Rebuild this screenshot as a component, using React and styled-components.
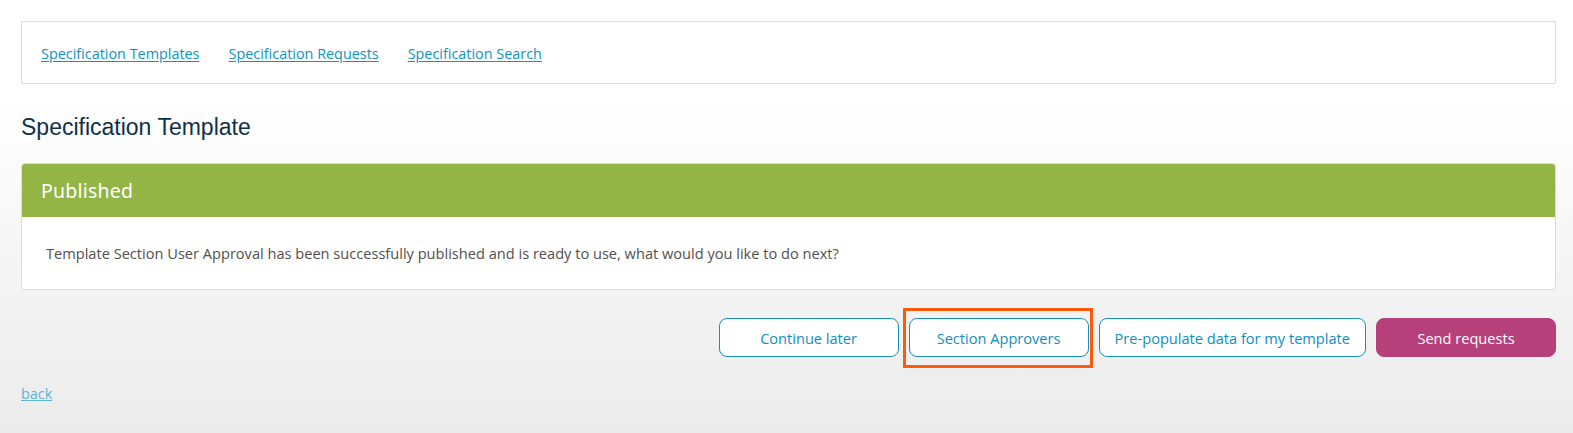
import React from "react";
import styled, { createGlobalStyle } from "styled-components";

const GlobalStyle = createGlobalStyle`
  html, body {
    margin: 0;
    padding: 0;
  }
  body {
    min-height: 433px;
    background: linear-gradient(to bottom, #ffffff 0px, #ffffff 95px, #ebebeb 433px);
    font-family: "Open Sans", "Noto Sans", sans-serif;
  }
`;

const Page = styled.div`
  padding: 21px 17px 0 21px;
`;

const NavBox = styled.nav`
  display: flex;
  align-items: center;
  gap: 29px;
  height: 60px;
  padding: 1px 19px 0;
  background: #fff;
  border: 1px solid #dedede;
`;

const NavLink = styled.a`
  color: #0d94c4;
  font-size: 14.4px;
  text-decoration: underline;
  text-underline-offset: 2px;
  cursor: pointer;
`;

const Title = styled.h1`
  margin: 30px 0 22px;
  font-family: "Liberation Sans", Arial, sans-serif;
  font-weight: 400;
  font-size: 23px;
  color: #0f3148;
`;

const Card = styled.section`
  border: 1px solid #dcdcdc;
  border-radius: 4px;
  overflow: hidden;
  background: #fff;
`;

const CardHeader = styled.div`
  display: flex;
  align-items: center;
  height: 53px;
  padding: 0 19px;
  background: #92b545;
  color: #fff;
  font-family: "Noto Sans", sans-serif;
  font-size: 19.5px;
  letter-spacing: 0.2px;
`;

const CardBody = styled.div`
  padding: 26px 24px 25px;
  color: #505050;
  font-size: 14.6px;
  line-height: 21px;
`;

const Actions = styled.div`
  display: flex;
  justify-content: flex-end;
  gap: 10px;
  margin-top: 28px;
`;

const Button = styled.button`
  position: relative;
  min-width: 180px;
  height: 39px;
  padding: 0 15px;
  border-radius: 8px;
  border: 1px solid ${(p) => (p.$primary ? "#b6407a" : "#1590bd")};
  background: ${(p) => (p.$primary ? "#b6407a" : "#fff")};
  color: ${(p) => (p.$primary ? "#fff" : "#0d8fbf")};
  font-family: "Open Sans", "Noto Sans", sans-serif;
  font-size: 14.6px;
  cursor: pointer;

  ${(p) =>
    p.$highlighted &&
    `
    &::after {
      content: "";
      position: absolute;
      top: -11px;
      bottom: -12px;
      left: -7px;
      right: -5px;
      border: 3px solid #ff5a0a;
      pointer-events: none;
    }
  `}
`;

const BackLink = styled.a`
  display: inline-block;
  margin-top: 27px;
  color: #5cb3d6;
  font-size: 14.4px;
  text-decoration: underline;
  cursor: pointer;
`;

export default function App() {
  return (
    <Page>
      <GlobalStyle />
      <NavBox>
        <NavLink>Specification Templates</NavLink>
        <NavLink>Specification Requests</NavLink>
        <NavLink>Specification Search</NavLink>
      </NavBox>
      <Title>Specification Template</Title>
      <Card>
        <CardHeader>Published</CardHeader>
        <CardBody>
          Template Section User Approval has been successfully published and is ready to use, what would you like to do next?
        </CardBody>
      </Card>
      <Actions>
        <Button>Continue later</Button>
        <Button $highlighted>Section Approvers</Button>
        <Button>Pre-populate data for my template</Button>
        <Button $primary>Send requests</Button>
      </Actions>
      <BackLink>back</BackLink>
    </Page>
  );
}
